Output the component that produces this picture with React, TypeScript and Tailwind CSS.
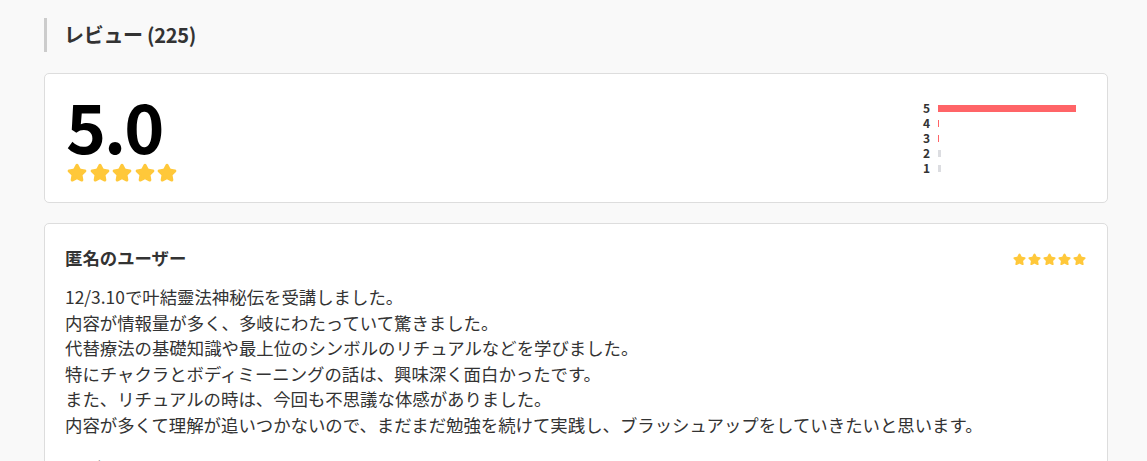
import { Star } from "lucide-react";

const font = { fontFamily: '"Noto Sans CJK JP", "Noto Sans", sans-serif' };

const dist = [
  { n: 5, w: 138, color: "bg-[#ff6467]" },
  { n: 4, w: 1, color: "bg-[#ff6467]" },
  { n: 3, w: 1, color: "bg-[#ff6467]" },
  { n: 2, w: 3, color: "bg-[#dcdde1]" },
  { n: 1, w: 3, color: "bg-[#dcdde1]" },
];

const lines = [
  "12/3.10で叶結靈法神秘伝を受講しました。",
  "内容が情報量が多く、多岐にわたっていて驚きました。",
  "代替療法の基礎知識や最上位のシンボルのリチュアルなどを学びました。",
  "特にチャクラとボディミーニングの話は、興味深く面白かったです。",
  "また、リチュアルの時は、今回も不思議な体感がありました。",
  "内容が多くて理解が追いつかないので、まだまだ勉強を続けて実践し、ブラッシュアップをしていきたいと思います。",
];

function Stars({ size, gap }: { size: number; gap: string }) {
  return (
    <div className={`flex ${gap}`}>
      {[0, 1, 2, 3, 4].map((i) => (
        <Star key={i} size={size} fill="#ffc83a" stroke="#ffc83a" strokeWidth={2.5} />
      ))}
    </div>
  );
}

export default function App() {
  return (
    <div className="min-h-screen bg-[#f9f9f9] text-[#333]" style={font}>
      <div className="ml-[44px] w-[1064px] pt-[18px]">
        {/* Heading */}
        <div className="border-l-[3px] border-[#cccccc] pl-[17px] h-[34px] flex items-center">
          <h2 className="text-[20px] font-bold leading-none tracking-[-0.3px]">レビュー (225)</h2>
        </div>

        {/* Summary card */}
        <div className="mt-[21px] h-[130px] bg-white border border-[#dddddd] rounded-[5px] flex items-center justify-between pl-[21px] pr-[31px]">
          <div className="flex flex-col -mt-[3px]">
            <div className="text-[68px] font-bold leading-none text-black tracking-[-2px]">5.0</div>
            <div className="mt-[4px] ml-[1px]">
              <Stars size={20} gap="gap-[2.5px]" />
            </div>
          </div>
          <div className="flex flex-col">
            {dist.map((d) => (
              <div key={d.n} className="flex items-center h-[15px]">
                <span className="w-[15px] text-[12px] font-bold leading-none">{d.n}</span>
                <div className={`h-[7px] ${d.color}`} style={{ width: d.w }} />
                <div style={{ width: 138 - d.w }} />
              </div>
            ))}
          </div>
        </div>

        {/* Review card */}
        <div className="mt-[20px] bg-white border border-[#dddddd] rounded-[5px] pl-[20px] pr-[21px] pt-[22px] pb-[20px]">
          <div className="flex items-start justify-between">
            <div className="text-[17.4px] font-bold leading-[24px]">匿名のユーザー</div>
            <div className="mt-[7px]">
              <Stars size={13} gap="gap-[2px]" />
            </div>
          </div>
          <div className="mt-[14px] text-[17.4px] leading-[25.6px]">
            {lines.map((l, i) => (
              <p key={i}>{l}</p>
            ))}
          </div>
          <div className="mt-[18px] text-[12px] text-[#888] leading-[20px] tracking-[1px]">2023年12月10日</div>
        </div>
      </div>
    </div>
  );
}
